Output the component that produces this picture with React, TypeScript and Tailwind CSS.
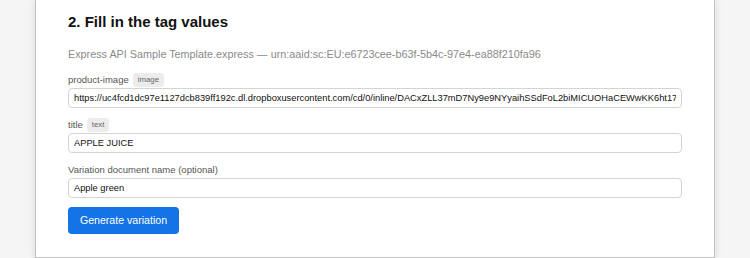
import React from "react";

const fields = [
  {
    label: "product-image",
    badge: "image",
    value:
      "https://uc4fcd1dc97e1127dcb839ff192c.dl.dropboxusercontent.com/cd/0/inline/DACxZLL37mD7Ny9e9NYyaihSSdFoL2biMICUOHaCEWwKK6ht17Zq0aXhT4",
  },
  { label: "title", badge: "text", value: "APPLE JUICE" },
  { label: "Variation document name (optional)", badge: null, value: "Apple green" },
];

export default function App() {
  return (
    <div className="h-[258px] overflow-hidden bg-[#f5f5f5] font-['Liberation_Sans',Arial,sans-serif]">
      <div className="ml-[35px] w-[680px] h-[258px] bg-white border border-t-0 border-[#c2c2c2] shadow-[0_0_8px_rgba(0,0,0,0.12)] px-[32px] pt-[13px]">
        <h2 className="text-[15px] font-bold text-[#111] leading-[18px]">2. Fill in the tag values</h2>
        <p className="mt-[16px] text-[10.8px] text-[#8a8a8a] leading-[14px]">
          Express API Sample Template.express — urn:aaid:sc:EU:e6723cee-b63f-5b4c-97e4-ea88f210fa96
        </p>

        <div className="mt-[12px] flex flex-col gap-[10px]">
          {fields.map((f) => (
            <div key={f.label} className="flex flex-col gap-[1px]">
              <div className="flex items-center gap-[4px] h-[14px]">
                <span className="text-[9.5px] text-[#555] leading-[14px]">{f.label}</span>
                {f.badge && (
                  <span className="bg-[#ececec] text-[#666] text-[7.8px] leading-[14px] px-[5px] rounded-[3px]">
                    {f.badge}
                  </span>
                )}
              </div>
              <input
                readOnly
                value={f.value}
                className="w-full h-[20px] border border-[#d4d4d4] rounded-[4px] px-[5px] text-[9.3px] text-[#111] font-['Liberation_Sans',Arial,sans-serif] outline-none"
              />
            </div>
          ))}
        </div>

        <button className="mt-[9px] h-[27px] w-[111px] rounded-[4px] bg-[#1473e6] text-white text-[10.6px]">
          Generate variation
        </button>
      </div>
    </div>
  );
}
